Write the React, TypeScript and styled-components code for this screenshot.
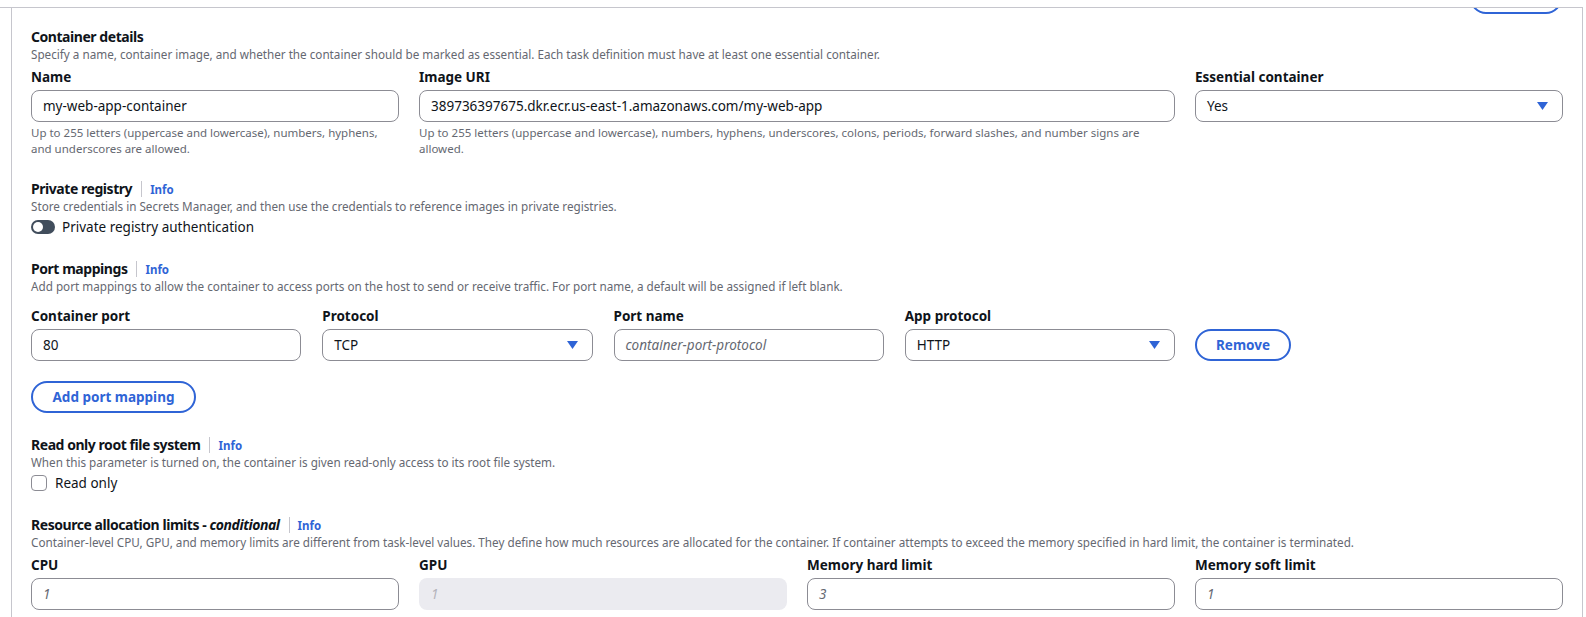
import React from "react";
import styled, { createGlobalStyle } from "styled-components";

const BLUE = "#2f64d6";
const TEXT = "#0f141a";
const MUTED = "#656871";
const BORDER = "#8c8c94";

const GlobalStyle = createGlobalStyle`
  html, body {
    margin: 0;
    padding: 0;
    background: #ffffff;
  }
  body {
    font-family: "Noto Sans", "Open Sans", Arial, sans-serif;
    color: ${TEXT};
  }
  * {
    box-sizing: border-box;
  }
`;

const Frame = styled.div`
  position: relative;
  margin: 7px 3px 0 0;
  padding-left: 11px;
  border-top: 1px solid #c6c6cd;
  overflow: hidden;
  height: 610px;
`;

const ClippedButton = styled.div`
  position: absolute;
  top: -26px;
  right: 21px;
  width: 92px;
  height: 32px;
  border: 2px solid ${BLUE};
  border-radius: 20px;
  background: #fff;
`;

const Panel = styled.div`
  border-left: 1px solid #c6c6cd;
  border-right: 1px solid #c6c6cd;
  padding: 20px 19px 0 19px;
  height: 100%;
  display: flex;
  flex-direction: column;
  gap: 23px;
`;

const Section = styled.section`
  display: flex;
  flex-direction: column;
`;

const HeadingRow = styled.div`
  display: flex;
  align-items: center;
  height: 18px;
`;

const Heading = styled.h3`
  margin: 0;
  font-size: 14px;
  line-height: 18px;
  font-weight: 700;
  letter-spacing: -0.45px;
  em {
    font-style: italic;
  }
`;

const Divider = styled.span`
  width: 1px;
  height: 16px;
  background: #c6c6cd;
  margin: 0 8px 0 9px;
`;

const InfoLink = styled.a`
  font-size: 11.5px;
  font-weight: 700;
  color: ${BLUE};
  text-decoration: none;
`;

const Description = styled.p`
  margin: 0;
  font-size: 11.7px;
  line-height: 16px;
  color: ${MUTED};
`;

const Grid = styled.div<{ $top?: number }>`
  display: grid;
  grid-template-columns: repeat(4, 1fr);
  column-gap: 20px;
  margin-top: ${({ $top }) => $top ?? 6}px;
`;

const PortFields = styled.div`
  grid-column: span 3;
  display: grid;
  grid-template-columns: repeat(4, 1fr);
  column-gap: 21px;
`;

const Field = styled.div<{ $span?: number }>`
  display: flex;
  flex-direction: column;
  grid-column: span ${({ $span }) => $span ?? 1};
  min-width: 0;
`;

const Label = styled.label`
  font-size: 13.5px;
  line-height: 18px;
  font-weight: 700;
  margin-bottom: 4px;
`;

const Input = styled.div<{ $placeholder?: boolean; $disabled?: boolean }>`
  height: 32px;
  border-radius: 8px;
  border: 1px solid ${({ $disabled }) => ($disabled ? "transparent" : BORDER)};
  background: ${({ $disabled }) => ($disabled ? "#ebebf0" : "#fff")};
  display: flex;
  align-items: center;
  padding: 0 11px;
  font-size: 13.5px;
  font-style: ${({ $placeholder }) => ($placeholder ? "italic" : "normal")};
  color: ${({ $placeholder, $disabled }) =>
    $disabled ? "#b4b4bb" : $placeholder ? MUTED : TEXT};
  white-space: nowrap;
  overflow: hidden;
`;

const Select = styled(Input)`
  justify-content: space-between;
  padding-right: 14px;
`;

const Caret = styled.svg`
  width: 11px;
  height: 8px;
  fill: ${BLUE};
  flex-shrink: 0;
`;

const Helper = styled.div`
  font-size: 11.5px;
  line-height: 16px;
  color: ${MUTED};
  margin-top: 3px;
`;

const PillButton = styled.button`
  height: 32px;
  border: 2px solid ${BLUE};
  border-radius: 20px;
  background: #fff;
  color: ${BLUE};
  font-family: inherit;
  font-size: 13.5px;
  font-weight: 700;
  padding: 0 19px;
  align-self: flex-start;
  cursor: pointer;
`;

const RemoveButton = styled(PillButton)`
  margin-top: 22px;
  width: 96px;
  padding: 0;
  justify-self: start;
`;

const AddButton = styled(PillButton)`
  margin-top: 20px;
  width: 165px;
  padding: 0;
`;

const OptionRow = styled.div`
  display: flex;
  align-items: center;
  gap: 7px;
  margin-top: 3px;
  height: 20px;
  font-size: 13.5px;
`;

const Toggle = styled.span`
  width: 24px;
  height: 14px;
  border-radius: 7px;
  background: #414d5c;
  position: relative;
  &::after {
    content: "";
    position: absolute;
    left: 2px;
    top: 2px;
    width: 10px;
    height: 10px;
    border-radius: 50%;
    background: #fff;
  }
`;

const Checkbox = styled.span`
  width: 16px;
  height: 16px;
  border: 1px solid ${BORDER};
  border-radius: 4px;
  background: #fff;
  margin-right: 1px;
`;

const CaretIcon = () => (
  <Caret viewBox="0 0 11 8">
    <path d="M0 0 H11 L5.5 8 Z" />
  </Caret>
);

const SectionHead: React.FC<{ title: React.ReactNode; info?: boolean; text: string }> = ({
  title,
  info,
  text,
}) => (
  <>
    <HeadingRow>
      <Heading>{title}</Heading>
      {info && (
        <>
          <Divider />
          <InfoLink href="#">Info</InfoLink>
        </>
      )}
    </HeadingRow>
    <Description>{text}</Description>
  </>
);

export default function App() {
  return (
    <>
      <GlobalStyle />
      <Frame>
        <ClippedButton />
        <Panel>
          <Section>
            <SectionHead
              title="Container details"
              text="Specify a name, container image, and whether the container should be marked as essential. Each task definition must have at least one essential container."
            />
            <Grid>
              <Field>
                <Label>Name</Label>
                <Input>my-web-app-container</Input>
                <Helper>
                  Up to 255 letters (uppercase and lowercase), numbers, hyphens,
                  and underscores are allowed.
                </Helper>
              </Field>
              <Field $span={2}>
                <Label>Image URI</Label>
                <Input>389736397675.dkr.ecr.us-east-1.amazonaws.com/my-web-app</Input>
                <Helper>
                  Up to 255 letters (uppercase and lowercase), numbers, hyphens,
                  underscores, colons, periods, forward slashes, and number signs are
                  allowed.
                </Helper>
              </Field>
              <Field>
                <Label>Essential container</Label>
                <Select>
                  Yes
                  <CaretIcon />
                </Select>
              </Field>
            </Grid>
          </Section>

          <Section>
            <SectionHead
              title="Private registry"
              info
              text="Store credentials in Secrets Manager, and then use the credentials to reference images in private registries."
            />
            <OptionRow>
              <Toggle />
              Private registry authentication
            </OptionRow>
          </Section>

          <Section>
            <SectionHead
              title="Port mappings"
              info
              text="Add port mappings to allow the container to access ports on the host to send or receive traffic. For port name, a default will be assigned if left blank."
            />
            <Grid $top={13}>
              <PortFields>
                <Field>
                  <Label>Container port</Label>
                  <Input>80</Input>
                </Field>
                <Field>
                  <Label>Protocol</Label>
                  <Select>
                    TCP
                    <CaretIcon />
                  </Select>
                </Field>
                <Field>
                  <Label>Port name</Label>
                  <Input $placeholder>container-port-protocol</Input>
                </Field>
                <Field>
                  <Label>App protocol</Label>
                  <Select>
                    HTTP
                    <CaretIcon />
                  </Select>
                </Field>
              </PortFields>
              <RemoveButton>Remove</RemoveButton>
            </Grid>
            <AddButton>Add port mapping</AddButton>
          </Section>

          <Section>
            <SectionHead
              title="Read only root file system"
              info
              text="When this parameter is turned on, the container is given read-only access to its root file system."
            />
            <OptionRow>
              <Checkbox />
              Read only
            </OptionRow>
          </Section>

          <Section>
            <SectionHead
              title={
                <>
                  Resource allocation limits - <em>conditional</em>
                </>
              }
              info
              text="Container-level CPU, GPU, and memory limits are different from task-level values. They define how much resources are allocated for the container. If container attempts to exceed the memory specified in hard limit, the container is terminated."
            />
            <Grid>
              <Field>
                <Label>CPU</Label>
                <Input $placeholder>1</Input>
              </Field>
              <Field>
                <Label>GPU</Label>
                <Input $placeholder $disabled>
                  1
                </Input>
              </Field>
              <Field>
                <Label>Memory hard limit</Label>
                <Input $placeholder>3</Input>
              </Field>
              <Field>
                <Label>Memory soft limit</Label>
                <Input $placeholder>1</Input>
              </Field>
            </Grid>
          </Section>
        </Panel>
      </Frame>
    </>
  );
}
